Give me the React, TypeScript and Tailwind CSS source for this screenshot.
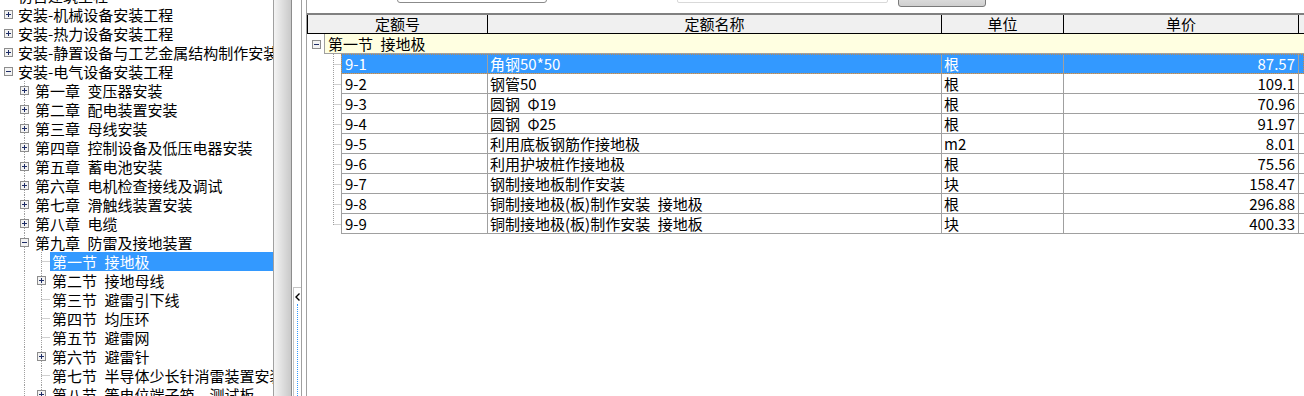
import React from "react";

type Kind = "plus" | "minus" | "leaf";
type TreeNode = { level: 0 | 1 | 2; text: string; kind: Kind; selected?: boolean };

const tree: TreeNode[] = [
  { level: 0, text: "仿古建筑工程", kind: "plus" },
  { level: 0, text: "安装-机械设备安装工程", kind: "plus" },
  { level: 0, text: "安装-热力设备安装工程", kind: "plus" },
  { level: 0, text: "安装-静置设备与工艺金属结构制作安装工程", kind: "plus" },
  { level: 0, text: "安装-电气设备安装工程", kind: "minus" },
  { level: 1, text: "第一章\u2002变压器安装", kind: "plus" },
  { level: 1, text: "第二章\u2002配电装置安装", kind: "plus" },
  { level: 1, text: "第三章\u2002母线安装", kind: "plus" },
  { level: 1, text: "第四章\u2002控制设备及低压电器安装", kind: "plus" },
  { level: 1, text: "第五章\u2002蓄电池安装", kind: "plus" },
  { level: 1, text: "第六章\u2002电机检查接线及调试", kind: "plus" },
  { level: 1, text: "第七章\u2002滑触线装置安装", kind: "plus" },
  { level: 1, text: "第八章\u2002电缆", kind: "plus" },
  { level: 1, text: "第九章\u2002防雷及接地装置", kind: "minus" },
  { level: 2, text: "第一节\u2002接地极", kind: "leaf", selected: true },
  { level: 2, text: "第二节\u2002接地母线", kind: "plus" },
  { level: 2, text: "第三节\u2002避雷引下线", kind: "leaf" },
  { level: 2, text: "第四节\u2002均压环", kind: "leaf" },
  { level: 2, text: "第五节\u2002避雷网", kind: "leaf" },
  { level: 2, text: "第六节\u2002避雷针", kind: "plus" },
  { level: 2, text: "第七节\u2002半导体少长针消雷装置安装", kind: "leaf" },
  { level: 2, text: "第八节\u2002等电位端子箱、测试板", kind: "plus" },
];

const rows = [
  { code: "9-1", name: "角钢50*50", unit: "根", price: "87.57" },
  { code: "9-2", name: "钢管50", unit: "根", price: "109.1" },
  { code: "9-3", name: "圆钢\u2002Φ19", unit: "根", price: "70.96" },
  { code: "9-4", name: "圆钢\u2002Φ25", unit: "根", price: "91.97" },
  { code: "9-5", name: "利用底板钢筋作接地极", unit: "m2", price: "8.01" },
  { code: "9-6", name: "利用护坡桩作接地极", unit: "根", price: "75.56" },
  { code: "9-7", name: "钢制接地板制作安装", unit: "块", price: "158.47" },
  { code: "9-8", name: "铜制接地极(板)制作安装\u2002接地极", unit: "根", price: "296.88" },
  { code: "9-9", name: "铜制接地极(板)制作安装\u2002接地板", unit: "块", price: "400.33" },
];

const DOT = "#a0a0a0";

function ExpBox({ cx, cy, minus }: { cx: number; cy: number; minus?: boolean }) {
  return (
    <g>
      <rect x={cx - 4} y={cy - 4} width={8} height={8} fill="#f3f3f3" stroke="#8d8d8d" />
      <line x1={cx - 2.5} y1={cy} x2={cx + 2.5} y2={cy} stroke="#1e2d66" />
      {!minus && <line x1={cx} y1={cy - 2.5} x2={cx} y2={cy + 2.5} stroke="#1e2d66" />}
    </g>
  );
}

function TreeRow({ node }: { node: TreeNode }) {
  const gw = [16, 33, 50][node.level];
  const cx = [8.5, 24.5, 41.5][node.level];
  return (
    <div className="flex h-[19px] items-center whitespace-nowrap">
      <svg width={gw} height={19} className="shrink-0">
        {node.level >= 1 && (
          <line x1={24.5} y1={0} x2={24.5} y2={19} stroke={DOT} strokeDasharray="1 1" />
        )}
        {node.level === 2 && (
          <line x1={41.5} y1={0} x2={41.5} y2={19} stroke={DOT} strokeDasharray="1 1" />
        )}
        {node.kind === "leaf" && (
          <line x1={cx} y1={9.5} x2={gw} y2={9.5} stroke={DOT} strokeDasharray="1 1" />
        )}
        {node.kind !== "leaf" && <ExpBox cx={cx} cy={9.5} minus={node.kind === "minus"} />}
      </svg>
      <span
        className={
          node.selected
            ? "flex-1 h-[19px] leading-[19px] pl-[2px] bg-[#3399ff] text-white"
            : "h-[19px] leading-[19px] pl-[2px]"
        }
      >
        {node.text}
      </span>
    </div>
  );
}

function TableRow({ r, last, selected }: { r: (typeof rows)[number]; last: boolean; selected: boolean }) {
  const cell = selected ? "bg-[#3399ff] text-white" : "bg-white";
  return (
    <div className="flex h-[20px]">
      <svg width={34} height={20} className="shrink-0">
        <line x1={26.5} y1={0} x2={26.5} y2={last ? 11 : 20} stroke={DOT} strokeDasharray="1 1" />
        <line x1={26.5} y1={10.5} x2={34} y2={10.5} stroke={DOT} strokeDasharray="1 1" />
      </svg>
      <div
        className={
          selected
            ? "flex-1 grid grid-cols-[147px_454px_122px_235px_1fr] outline-1 outline-dotted outline-[#b98a52] -outline-offset-1"
            : "flex-1 grid grid-cols-[147px_454px_122px_235px_1fr]"
        }
      >
        <div className={`${cell} border-l border-r border-b border-[#a0a0a0] pl-[3px] leading-[19px]`}>{r.code}</div>
        <div className={`${cell} border-r border-b border-[#a0a0a0] pl-[2px] leading-[19px] whitespace-nowrap`}>{r.name}</div>
        <div className={`${cell} border-r border-b border-[#a0a0a0] pl-[2px] leading-[19px]`}>{r.unit}</div>
        <div className={`${cell} border-r border-b border-[#a0a0a0] pr-[3px] text-right leading-[19px]`}>{r.price}</div>
        <div className={`${cell} border-b border-[#a0a0a0]`} />
      </div>
    </div>
  );
}

export default function App() {
  return (
    <div className="w-[1304px] h-[396px] flex overflow-hidden bg-white text-black text-[15px] font-['Noto_Sans_CJK_SC','Noto_Sans',sans-serif]">
      {/* tree panel */}
      <div className="w-[274px] shrink-0 h-full border-r border-[#a0a0a0] overflow-hidden">
        <div className="-mt-[14px]">
          {tree.map((n, i) => (
            <TreeRow key={i} node={n} />
          ))}
        </div>
      </div>

      {/* splitter */}
      <div className="w-[17px] shrink-0 h-full bg-linear-to-r from-[#f4f4f4] to-[#c9c9c9]" />
      <div className="w-[1px] shrink-0 h-full bg-[#8c8c8c]" />
      <div className="w-[10px] shrink-0 h-full bg-white border-r border-[#a0a0a0] flex flex-col">
        <div className="h-[287px] shrink-0" />
        <div className="ml-[1px] flex-1 border-t border-l border-[#c4c4c4] flex flex-col items-center pt-[5px]">
          <svg width={6} height={8} className="shrink-0">
            <path d="M4.5 0.5 L1 4 L4.5 7.5" fill="none" stroke="#000" strokeWidth={1.4} />
          </svg>
          <div className="mt-[3px] flex-1 border-l border-dotted border-[#3399ff]" />
        </div>
      </div>
      <div className="w-[4px] shrink-0 h-full bg-white" />

      {/* quota table */}
      <div className="flex-1 h-full border-l border-[#a0a0a0] flex flex-col min-w-0">
        <div className="h-[13px] shrink-0 flex items-start overflow-hidden">
          <div className="ml-[90px] -mt-[18px] w-[150px] h-[21px] shrink-0 border border-[#8b8b8b] rounded-[3px] bg-white" />
          <div className="ml-[130px] -mt-[18px] w-[211px] h-[21px] shrink-0 border border-[#d9d9d9] rounded-[2px] bg-white" />
          <div className="ml-[10px] -mt-[14px] w-[88px] h-[21px] shrink-0 border border-[#7a7a7a] rounded-[3px] bg-linear-to-b from-[#f2f2f2] to-[#cfcfcf]" />
        </div>

        <div className="h-[21px] shrink-0 grid grid-cols-[181px_454px_122px_235px_1fr] border-t-2 border-b border-t-[#808080] border-b-black bg-[#f0f0f0] leading-[18px] text-center">
          <div className="border-l border-r border-black">定额号</div>
          <div className="border-r border-black">定额名称</div>
          <div className="border-r border-black">单位</div>
          <div className="border-r border-black">单价</div>
          <div />
        </div>

        <div className="h-[20px] shrink-0 flex">
          <svg width={17} height={20} className="shrink-0">
            <ExpBox cx={9.5} cy={10.5} minus />
          </svg>
          <div className="flex-1 bg-[#ffffe1] border-l border-b border-[#a0a0a0] pl-[3px] leading-[19px] whitespace-nowrap">
            第一节{"\u2002"}接地极
          </div>
        </div>

        {rows.map((r, i) => (
          <TableRow key={r.code} r={r} last={i === rows.length - 1} selected={i === 0} />
        ))}

        <div className="flex-1 bg-white" />
      </div>
    </div>
  );
}
